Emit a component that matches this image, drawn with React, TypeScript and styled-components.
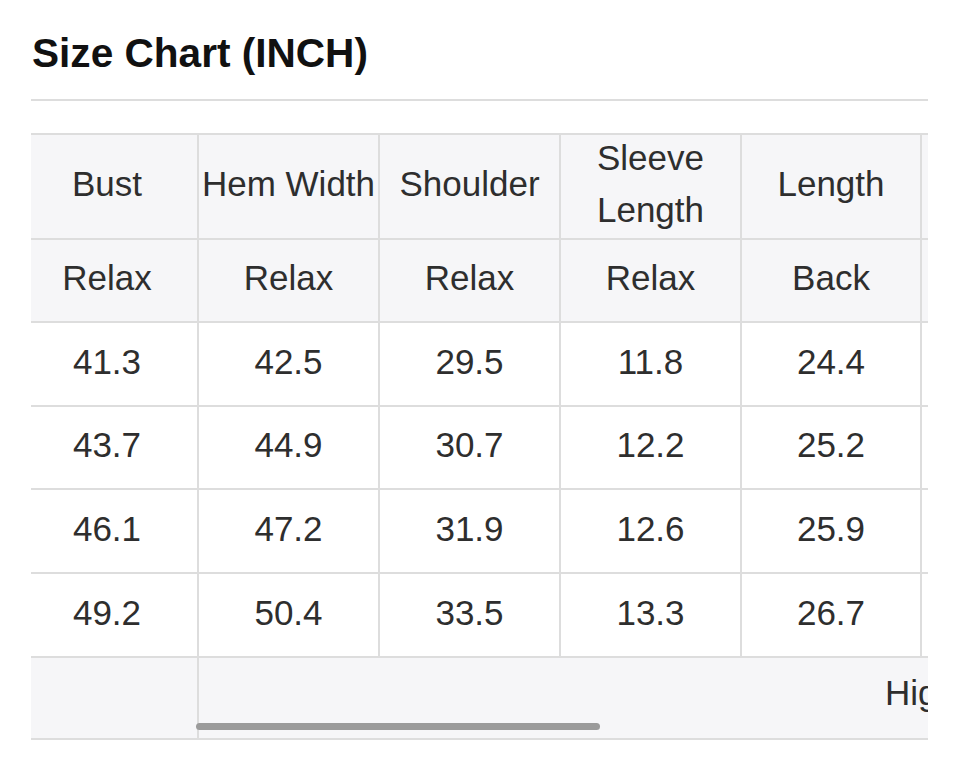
import React from "react";
import styled, { createGlobalStyle } from "styled-components";

const Global = createGlobalStyle`
  html, body { margin: 0; padding: 0; background: #ffffff; }
  body { font-family: "Liberation Sans", Arial, Helvetica, sans-serif; }
`;

const Page = styled.div`
  width: 960px;
  height: 760px;
  box-sizing: border-box;
  padding: 30px 32px 0 31px;
  display: flex;
  flex-direction: column;
  overflow: hidden;
`;

const Title = styled.h1`
  margin: 0 0 0 1px;
  font-size: 40.6px;
  line-height: 46px;
  font-weight: 700;
  color: #111111;
`;

const Rule = styled.div`
  margin-top: 23px;
  height: 2px;
  background: #dddddd;
`;

const ScrollArea = styled.div`
  position: relative;
  margin-top: 32px;
  width: 897px;
  overflow: hidden;
`;

const Grid = styled.div`
  display: grid;
  width: 1072px;
  grid-template-columns: 168px 181px 181px 181px 180px 181px;
  grid-template-rows: 105px 83px 84px 83px 84px 84px 82px;
  border-top: 2px solid #dddddd;
`;

const Cell = styled.div<{ $shade?: boolean; $first?: boolean }>`
  box-sizing: border-box;
  display: flex;
  align-items: center;
  justify-content: center;
  text-align: center;
  padding: 0 ${(p) => (p.$first ? "14px" : "0")} 5px 0;
  font-size: 35px;
  line-height: 52px;
  color: #2e2e2e;
  background: ${(p) => (p.$shade ? "#f6f6f8" : "#ffffff")};
  border-bottom: 2px solid #dddddd;
  border-right: 2px solid #dddddd;
  white-space: nowrap;
`;

const HeadText = styled.span<{ $narrow?: boolean }>`
  white-space: normal;
  width: ${(p) => (p.$narrow ? "120px" : "auto")};
`;

const NoteCell = styled.div`
  grid-column: 2 / -1;
  box-sizing: border-box;
  background: #f6f6f8;
  border-bottom: 2px solid #dddddd;
  padding: 9px 0 0 686px;
  font-size: 35px;
  line-height: 52px;
  color: #2e2e2e;
  white-space: nowrap;
`;

const Thumb = styled.div`
  position: absolute;
  left: 165px;
  top: 590px;
  width: 404px;
  height: 7px;
  border-radius: 4px;
  background: #9b9b9b;
`;

const headers = ["Bust", "Hem Width", "Shoulder", "Sleeve Length", "Length", ""];
const sub = ["Relax", "Relax", "Relax", "Relax", "Back", ""];
const rows = [
  ["41.3", "42.5", "29.5", "11.8", "24.4", ""],
  ["43.7", "44.9", "30.7", "12.2", "25.2", ""],
  ["46.1", "47.2", "31.9", "12.6", "25.9", ""],
  ["49.2", "50.4", "33.5", "13.3", "26.7", ""],
];

export default function App() {
  return (
    <>
      <Global />
      <Page>
        <Title>Size Chart (INCH)</Title>
        <Rule />
        <ScrollArea>
          <Grid>
            {headers.map((h, i) => (
              <Cell key={"h" + i} $shade $first={i === 0}>
                <HeadText $narrow={i === 3}>{h}</HeadText>
              </Cell>
            ))}
            {sub.map((s, i) => (
              <Cell key={"s" + i} $shade $first={i === 0}>
                {s}
              </Cell>
            ))}
            {rows.map((r, ri) =>
              r.map((v, ci) => (
                <Cell key={ri + "-" + ci} $first={ci === 0}>
                  {v}
                </Cell>
              ))
            )}
            <Cell $shade $first />
            <NoteCell>High Stretch</NoteCell>
          </Grid>
          <Thumb />
        </ScrollArea>
      </Page>
    </>
  );
}
